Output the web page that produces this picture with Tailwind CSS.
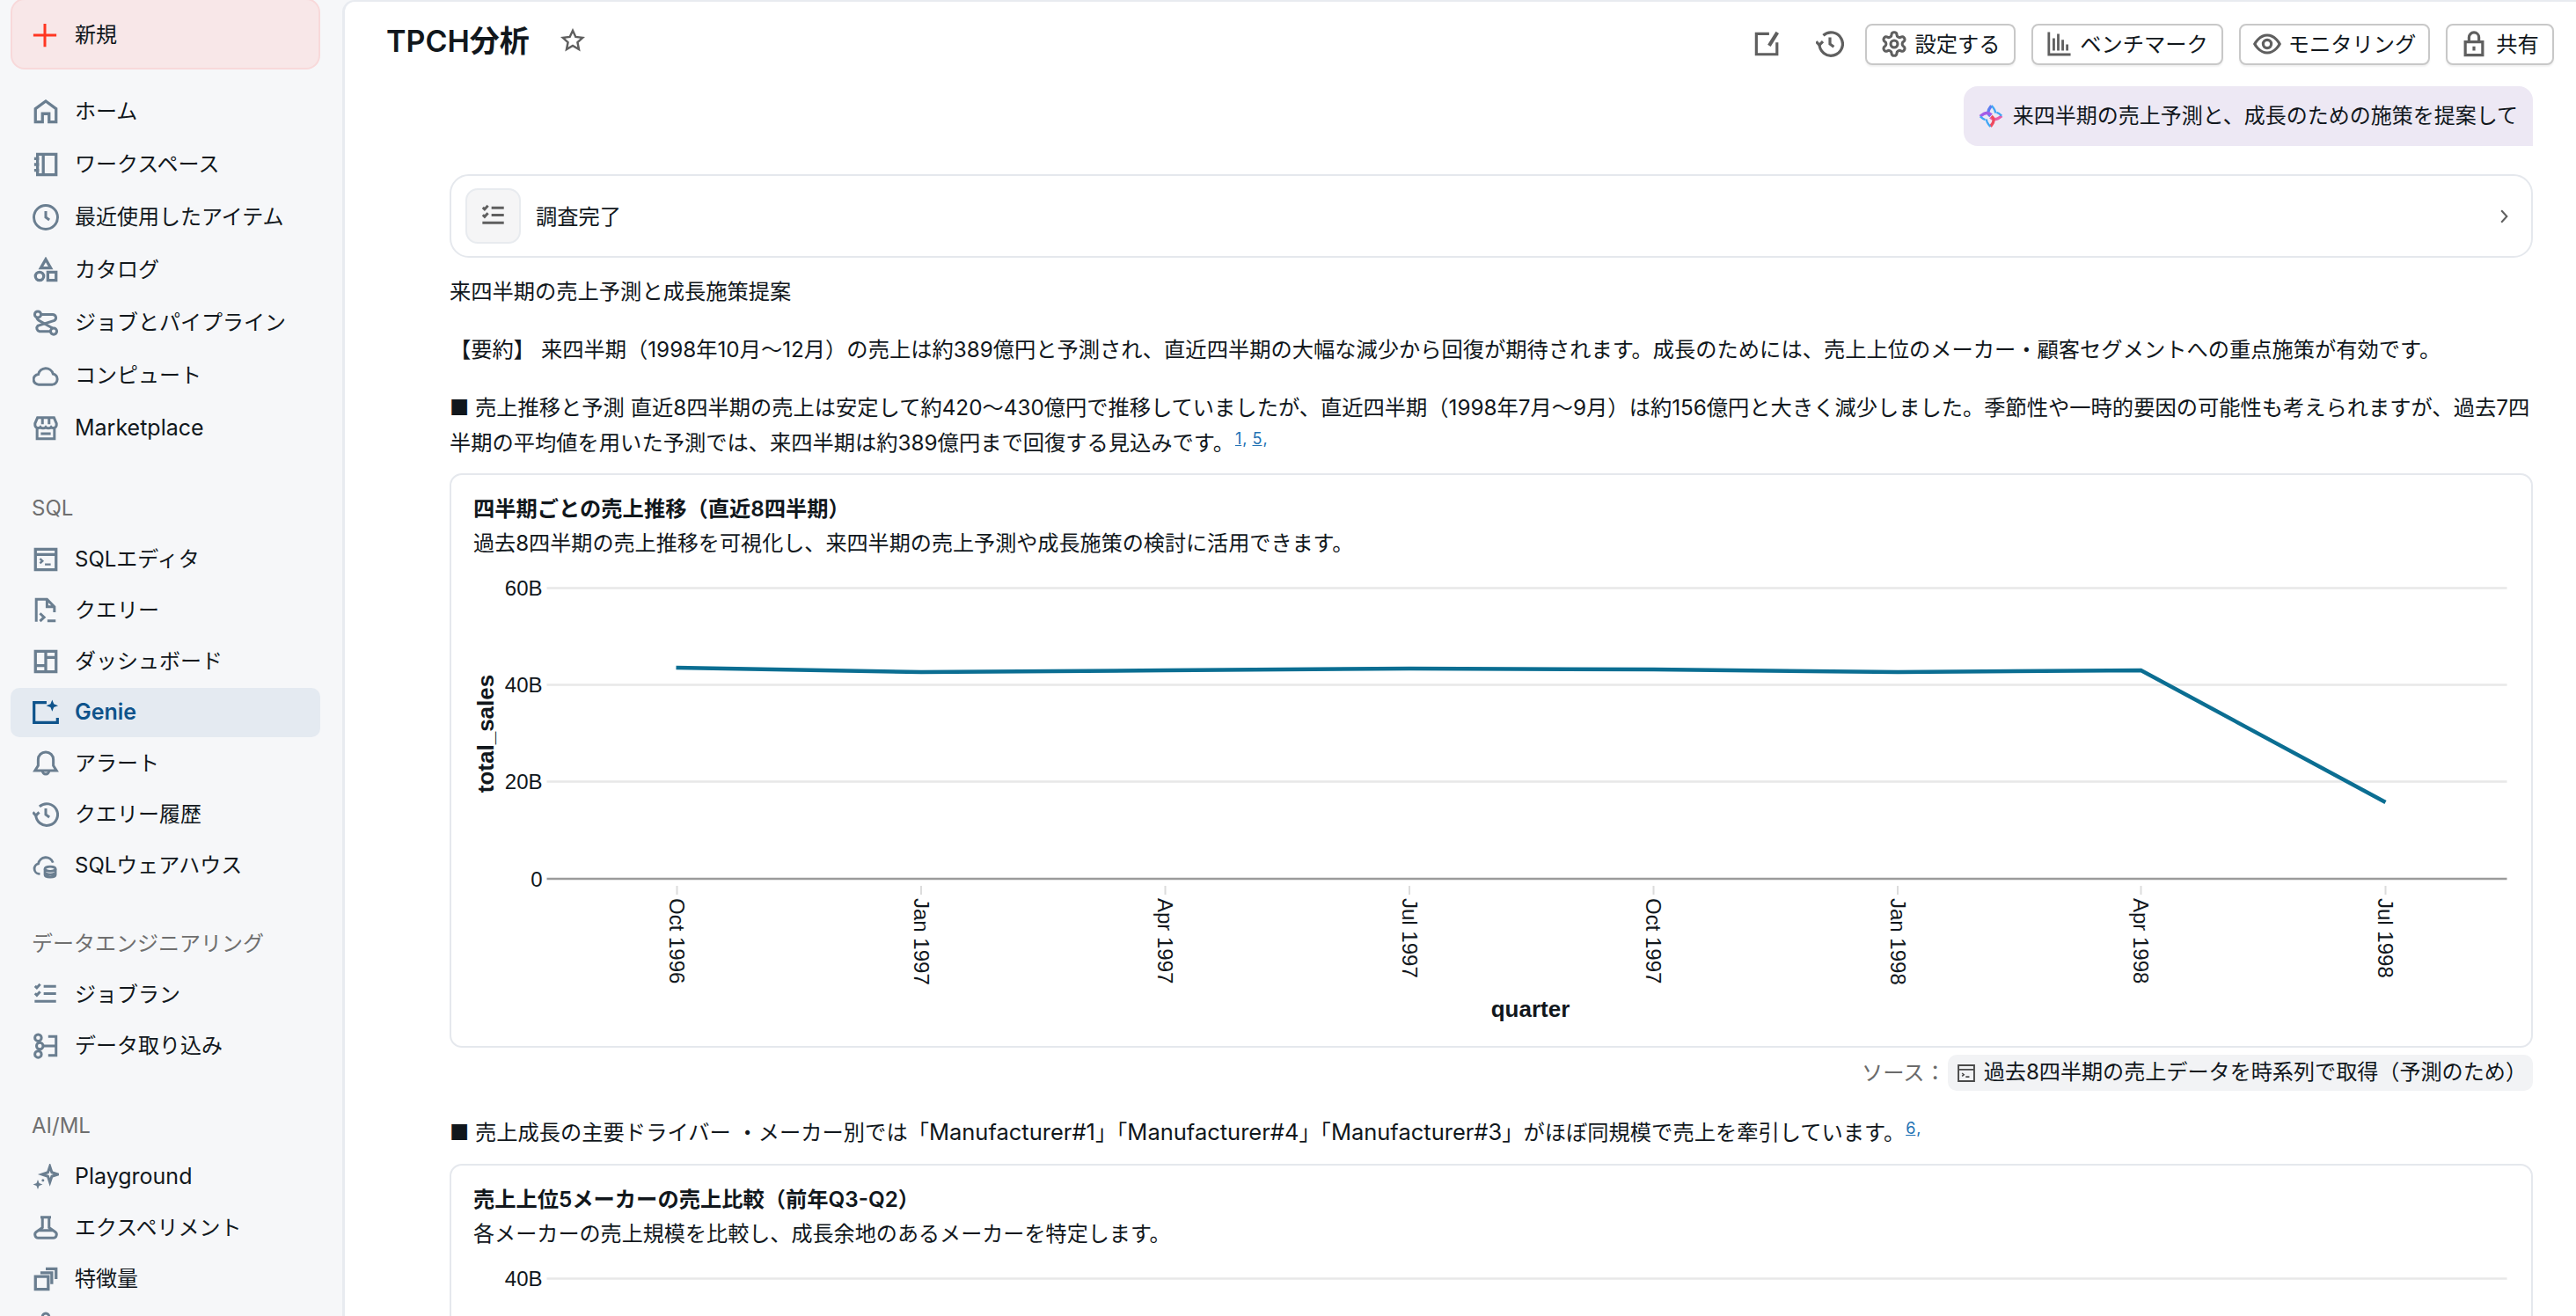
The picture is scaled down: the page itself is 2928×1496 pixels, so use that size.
<!DOCTYPE html>
<html lang="ja">
<head>
<meta charset="utf-8">
<title>TPCH分析</title>
<script src="https://cdn.jsdelivr.net/npm/@tailwindcss/browser@4"></script>
</head>
<body class="w-[2928px] h-[1496px] overflow-hidden bg-[#f6f7f9] text-[#11171c] font-['Inter','Noto_Sans_CJK_JP',sans-serif] text-[24.27px]">
<div class="flex w-full h-full">
  <!-- Sidebar -->
  <aside class="w-[389px] shrink-0 h-full overflow-hidden text-[24px]">
    <button class="ml-3 -mt-[2px] flex items-center gap-[19px] w-[352px] h-[81px] pl-[22px] pt-[2px] rounded-[16px] border-2 border-[#f8d9da] bg-[#f8e7e8]">
      <svg class="w-[30px] h-[30px] text-[#ff3621]" viewBox="0 0 16 16" fill="none" stroke="currentColor" stroke-width="1.6"><path d="M8 1v14M1 8h14"/></svg>
      <span>新規</span>
    </button>
    <nav class="mt-[18px]">
      <a class="flex items-center gap-[18px] h-[60px] pl-[37px]"><svg class="w-[30px] h-[30px] text-[#6a7e90]" viewBox="0 0 16 16" fill="none" stroke="currentColor" stroke-width="1.75"><path d="M1.75 14.25V6.200L8 1.600l6.250 4.600v8.050H10V9.200H6v5.050Z"/></svg><span>ホーム</span></a>
      <a class="flex items-center gap-[18px] h-[60px] pl-[37px]"><svg class="w-[30px] h-[30px] text-[#6a7e90]" viewBox="0 0 16 16" fill="none" stroke="currentColor" stroke-width="1.75"><path d="M3 1.750h11.250v12.500H3ZM6.500 1.750v12.500M1 4.500h3M1 8h3M1 11.500h3"/></svg><span>ワークスペース</span></a>
      <a class="flex items-center gap-[18px] h-[60px] pl-[37px]"><svg class="w-[30px] h-[30px] text-[#6a7e90]" viewBox="0 0 16 16" fill="none" stroke="currentColor" stroke-width="1.6"><circle cx="8" cy="8" r="7.200"/><path d="M8 4.250V8l2.200 1.600"/></svg><span>最近使用したアイテム</span></a>
      <a class="flex items-center gap-[18px] h-[60px] pl-[37px]"><svg class="w-[30px] h-[30px] text-[#6a7e90]" viewBox="0 0 16 16" fill="none" stroke="currentColor" stroke-width="1.75"><path d="M8 1.500 11 6.750H5Z"/><circle cx="4.250" cy="11.750" r="2.500"/><path d="M9.250 9.250h5v5h-5Z"/></svg><span>カタログ</span></a>
      <a class="flex items-center gap-[18px] h-[60px] pl-[37px]"><svg class="w-[30px] h-[30px] text-[#6a7e90]" viewBox="0 0 16 16" fill="none" stroke="currentColor" stroke-width="1.6"><circle cx="3.200" cy="2.900" r="1.900"/><circle cx="12.800" cy="13.100" r="1.900"/><path d="M5.200 2.900H12a2 2 0 0 1 1.200 3.700L3.200 9.800a2 2 0 0 0 1 3.400h6.600"/><path d="M2.600 4.900c.2 1.100 1 1.600 2 2.100l6 3.400c.5.3 1 .5 1.400.8"/></svg><span>ジョブとパイプライン</span></a>
      <a class="flex items-center gap-[18px] h-[60px] pl-[37px]"><svg class="w-[30px] h-[30px] text-[#6a7e90]" viewBox="0 0 16 16" fill="none" stroke="currentColor" stroke-width="1.6"><path d="M3.900 13.400a3.100 3.100 0 0 1-.4-6.200 4.600 4.600 0 0 1 8.900-.3 3.300 3.300 0 0 1-.3 6.500Z"/></svg><span>コンピュート</span></a>
      <a class="flex items-center gap-[18px] h-[60px] pl-[37px]"><svg class="w-[30px] h-[30px] text-[#6a7e90]" viewBox="0 0 16 16" fill="none" stroke="currentColor" stroke-width="1.6"><path d="M3 1.500h10l1.500 3.500v1a1.900 1.900 0 0 1-3.250 1.200 2.200 2.200 0 0 1-3.250 0 2.200 2.200 0 0 1-3.250 0A1.900 1.900 0 0 1 1.500 6V5ZM6 1.500v4M10 1.500v4M2.750 8v6.250h10.500V8M5 11.250h6"/></svg><span class="text-[25px]">Marketplace</span></a>
    </nav>

    <div class="mt-[46px] mb-[14px] h-[30px] pl-[36px] flex items-center text-[#6f6f6f]">SQL</div>
    <nav>
      <a class="flex items-center gap-[18px] h-[58px] pl-[37px]"><svg class="w-[30px] h-[30px] text-[#6a7e90]" viewBox="0 0 16 16" fill="none" stroke="currentColor" stroke-width="1.75"><path d="M1.750 1.750h12.500v12.500H1.750ZM1.750 5h12.500"/><path d="M4.500 7.500 6 8.900 4.500 10.300M7.500 11h3.500" stroke-width="1.300"/></svg><span>SQLエディタ</span></a>
      <a class="flex items-center gap-[18px] h-[58px] pl-[37px]"><svg class="w-[30px] h-[30px] text-[#6a7e90]" viewBox="0 0 16 16" fill="none" stroke="currentColor" stroke-width="1.600"><path d="M2.250 14.750V1.250h6.500l4.500 4.500V9M8.750 1.250v4.500h4.500"/><path d="M4.500 9.750 7 12.100 4.500 14.500M9 14.250h5"/></svg><span>クエリー</span></a>
      <a class="flex items-center gap-[18px] h-[58px] pl-[37px]"><svg class="w-[30px] h-[30px] text-[#6a7e90]" viewBox="0 0 16 16" fill="none" stroke="currentColor" stroke-width="1.750"><path d="M1.750 1.750h12.500v12.500H1.750ZM8 1.750v12.500M1.750 10.500H8M8 5.500h6.250"/></svg><span>ダッシュボード</span></a>
      <a class="ml-3 my-px flex items-center gap-[18px] w-[352px] h-[56px] pl-[25px] rounded-[10px] bg-[#e4eaf1] text-[#0e538b] font-semibold"><svg class="w-[30px] h-[30px]" viewBox="0 0 16 16" fill="none" stroke="currentColor" stroke-width="1.700"><path d="M8.500 1.900H.9v12.200h14.200V11.200"/><path d="M11.900.3l1 2.500 2.600 1-2.600 1-1 2.500-1-2.500-2.600-1 2.600-1Z" fill="currentColor" stroke="none"/></svg><span class="text-[25px]">Genie</span></a>
      <a class="flex items-center gap-[18px] h-[58px] pl-[37px]"><svg class="w-[30px] h-[30px] text-[#6a7e90]" viewBox="0 0 16 16" fill="none" stroke="currentColor" stroke-width="1.600"><path d="M8 1a4.600 4.600 0 0 0-4.600 4.600v3.600L1.500 12.200h13l-1.900-3V5.600A4.600 4.600 0 0 0 8 1Z"/><path d="M6 12.400a2 2 0 0 0 4 0"/></svg><span>アラート</span></a>
      <a class="flex items-center gap-[18px] h-[58px] pl-[37px]"><svg class="w-[30px] h-[30px] text-[#6a7e90]" viewBox="0 0 16 16" fill="none" stroke="currentColor" stroke-width="1.600"><path d="M2 8a6.600 6.600 0 1 0 2.200-4.900"/><path d="M.2 6.600 2 8.600l2-2"/><path d="M8 4.250V8l2.200 1.600"/></svg><span>クエリー履歴</span></a>
      <a class="flex items-center gap-[18px] h-[58px] pl-[37px]"><svg class="w-[30px] h-[30px] text-[#6a7e90]" viewBox="0 0 16 16" fill="none" stroke="currentColor" stroke-width="1.500"><path d="M4.500 13H3.900A3.100 3.100 0 0 1 3.500 6.900 4.600 4.600 0 0 1 12.400 6.200"/><ellipse cx="10.700" cy="10" rx="3.200" ry="1.400"/><path d="M7.500 10v3.600c0 .8 1.400 1.400 3.200 1.400s3.200-.6 3.200-1.400V10M7.500 12c0 .8 1.400 1.400 3.200 1.400s3.200-.6 3.200-1.400"/></svg><span>SQLウェアハウス</span></a>
    </nav>

    <div class="mt-[45px] mb-[14px] h-[30px] pl-[36px] flex items-center text-[#6f6f6f]">データエンジニアリング</div>
    <nav>
      <a class="flex items-center gap-[18px] h-[58px] pl-[37px]"><svg class="w-[30px] h-[30px] text-[#6a7e90]" viewBox="0 0 16 16" fill="none" stroke="currentColor" stroke-width="1.600"><path d="M1.500 2.600l1.100 1.100 2-2.200M1.500 7.100l1.100 1.100 2-2.200M6.750 2.750h7.500M6.750 7.250h7.500M1.250 11.900h13"/></svg><span>ジョブラン</span></a>
      <a class="flex items-center gap-[18px] h-[58px] pl-[37px]"><svg class="w-[30px] h-[30px] text-[#6a7e90]" viewBox="0 0 16 16" fill="none" stroke="currentColor" stroke-width="1.600"><circle cx="3.400" cy="3" r="2"/><circle cx="4.400" cy="8" r="2"/><circle cx="3.400" cy="13" r="2"/><path d="M9.500 2.250h4.750v11.500H9.500M6.500 8h7.750"/></svg><span>データ取り込み</span></a>
    </nav>

    <div class="mt-[47px] mb-[14px] h-[30px] pl-[36px] flex items-center text-[#6f6f6f]">AI/ML</div>
    <nav>
      <a class="flex items-center gap-[18px] h-[58px] pl-[37px]"><svg class="w-[30px] h-[30px] text-[#6a7e90]" viewBox="0 0 16 16" fill="none" stroke="currentColor" stroke-width="1.600"><path d="M10.500 1.600l1.200 3.600 3.600 1.200-3.600 1.200-1.200 3.600-1.200-3.600-3.600-1.200 3.600-1.200Z"/><path d="M3.200 9.600l.8 2.100 2.100.8-2.100.8-.8 2.100-.8-2.100-2.100-.8 2.100-.8Z" fill="currentColor" stroke="none"/><circle cx="6.300" cy="10" r=".8" fill="currentColor" stroke="none"/></svg><span class="text-[25px]">Playground</span></a>
      <a class="flex items-center gap-[18px] h-[58px] pl-[37px]"><svg class="w-[30px] h-[30px] text-[#6a7e90]" viewBox="0 0 16 16" fill="none" stroke="currentColor" stroke-width="1.600"><path d="M4.800 1.500h6.400M6 1.500v6.200L2.200 10.400c-1.400 1-.7 3.600 1.200 3.600h9.200c1.900 0 2.600-2.600 1.200-3.600L10 7.700V1.500M3.800 9.400h8.400"/></svg><span>エクスペリメント</span></a>
      <a class="flex items-center gap-[18px] h-[58px] pl-[37px]"><svg class="w-[30px] h-[30px] text-[#6a7e90]" viewBox="0 0 16 16" fill="none" stroke="currentColor" stroke-width="1.750"><path d="M1.750 6.500h7.750v7.750H1.750ZM8 1.750h6.250V8M4.750 4.200h6.900V11"/></svg><span>特徴量</span></a>
      <div class="pl-[37px] pt-[8px]"><svg class="w-[30px] h-[30px] text-[#6a7e90]" viewBox="0 0 16 16" fill="none" stroke="currentColor" stroke-width="1.600"><circle cx="8" cy="3" r="2"/><path d="M3 14l5-9 5 9Z"/></svg></div>
    </nav>
  </aside>

  <!-- Main -->
  <main class="flex-1 min-w-0 h-full overflow-hidden bg-white border-t-2 border-l-[3px] border-[#e8ebf0] rounded-tl-[14px]">
    <header class="flex items-center h-[96px] pl-[47px] pr-[25px]">
      <h1 class="mb-[6px] text-[34px] font-semibold leading-none">TPCH分析</h1>
      <svg class="ml-[35px] mb-[8px] w-[28px] h-[28px] text-[#5f5f5f]" viewBox="0 0 16 16" fill="none" stroke="currentColor" stroke-width="1.400"><path d="M8 1.600l1.900 4.100 4.500.5-3.300 3 .9 4.500-4-2.300-4 2.300.9-4.500-3.300-3 4.500-.5Z"/></svg>
      <div class="ml-auto flex items-center gap-[18px]">
        <svg class="mr-[22px] w-[30px] h-[30px] text-[#5f5f5f]" viewBox="0 0 16 16" fill="none" stroke="currentColor" stroke-width="1.700"><path d="M9 1.750H1.250v12.500h12.500V7"/><path d="M14 1 9 9" stroke-width="2.200"/></svg>
        <svg class="mr-[6px] w-[32px] h-[32px] text-[#5f5f5f]" viewBox="0 0 16 16" fill="none" stroke="currentColor" stroke-width="1.600"><path d="M2 8a6.600 6.600 0 1 0 2.200-4.900"/><path d="M.2 6.600 2 8.600l2-2"/><path d="M8 4.250V8l2.200 1.600"/></svg>
        <button class="flex items-center gap-[7px] h-[47px] w-[171px] justify-center rounded-[8px] border-2 border-[#c8c8c8] bg-white shadow-[0_2px_2px_rgba(0,0,0,0.06)]">
          <svg class="w-[32px] h-[32px] text-[#5f5f5f]" viewBox="0 0 24 24" fill="none" stroke="currentColor" stroke-width="2.300"><path d="M12.220 2h-.44a2 2 0 0 0-2 2v.18a2 2 0 0 1-1 1.730l-.43.25a2 2 0 0 1-2 0l-.15-.08a2 2 0 0 0-2.730.73l-.22.38a2 2 0 0 0 .73 2.730l.15.1a2 2 0 0 1 1 1.720v.51a2 2 0 0 1-1 1.740l-.15.09a2 2 0 0 0-.73 2.730l.22.38a2 2 0 0 0 2.730.73l.15-.08a2 2 0 0 1 2 0l.43.25a2 2 0 0 1 1 1.730V20a2 2 0 0 0 2 2h.44a2 2 0 0 0 2-2v-.18a2 2 0 0 1 1-1.730l.43-.25a2 2 0 0 1 2 0l.15.08a2 2 0 0 0 2.730-.73l.22-.39a2 2 0 0 0-.73-2.730l-.15-.08a2 2 0 0 1-1-1.740v-.5a2 2 0 0 1 1-1.740l.15-.09a2 2 0 0 0 .73-2.730l-.22-.38a2 2 0 0 0-2.730-.73l-.15.08a2 2 0 0 1-2 0l-.43-.25a2 2 0 0 1-1-1.730V4a2 2 0 0 0-2-2z"/><circle cx="12" cy="12" r="3"/></svg>
          <span>設定する</span>
        </button>
        <button class="flex items-center gap-[8px] h-[47px] w-[218px] justify-center rounded-[8px] border-2 border-[#c8c8c8] bg-white shadow-[0_2px_2px_rgba(0,0,0,0.06)]">
          <svg class="w-[30px] h-[30px] text-[#5f5f5f]" viewBox="0 0 16 16" fill="none" stroke="currentColor" stroke-width="1.500"><path d="M1.500 .8v13.600h13.200"/><path d="M4.500 4.500v7.500M7.200 1.800v10.200M9.900 5.500v6.500M12.600 8.200v3.800"/></svg>
          <span>ベンチマーク</span>
        </button>
        <button class="flex items-center gap-[8px] h-[47px] w-[217px] justify-center rounded-[8px] border-2 border-[#c8c8c8] bg-white shadow-[0_2px_2px_rgba(0,0,0,0.06)]">
          <svg class="w-[32px] h-[32px] text-[#5f5f5f]" viewBox="0 0 16 16" fill="none" stroke="currentColor" stroke-width="1.600"><path d="M.9 8S3.400 3 8 3s7.100 5 7.100 5-2.500 5-7.100 5-7.100-5-7.100-5Z"/><circle cx="8" cy="8" r="2.300"/></svg>
          <span>モニタリング</span>
        </button>
        <button class="flex items-center gap-[10px] h-[47px] w-[123px] justify-center rounded-[8px] border-2 border-[#c8c8c8] bg-white shadow-[0_2px_2px_rgba(0,0,0,0.06)]">
          <svg class="w-[30px] h-[30px] text-[#5f5f5f]" viewBox="0 0 16 16" fill="none" stroke="currentColor" stroke-width="1.700"><path d="M2.750 6.750h10.500v8H2.750ZM5 6.750V4a3 3 0 0 1 6 0v2.750M8 9.500v2.500"/></svg>
          <span>共有</span>
        </button>
      </div>
    </header>

    <div class="pl-[119px] pr-[49px]">
      <div class="flex justify-end">
        <div class="flex items-center gap-[11px] h-[68px] pl-[17px] pr-[17px] rounded-t-[16px] rounded-bl-[16px] bg-[#ede8f4] text-[24px]">
          <svg class="w-[28px] h-[28px]" viewBox="0 0 16 16" fill="none" stroke-width="1.900"><path d="M8.400 1.200c-1 1.400-2.200 2.400-2.200 4.200 0 1 .6 2 1.400 2.600" stroke="#5d7cf0"/><path d="M1 8.200c1.400-1.200 2.600-2.200 4.400-2.200 1.200 0 2.200.4 3 1.200" stroke="#a25ce8"/><path d="M15 7.800c-1.400 1.200-2.600 2.200-4.400 2.200-1.200 0-2.200-.4-3-1.200" stroke="#e85ca8"/><path d="M7.600 14.800c1-1.400 2.200-2.400 2.200-4.200 0-1-.6-2-1.400-2.600" stroke="#ef4a5f"/><path d="M8.400 1.200c.8.900 1.500 1.700 2 2.800.4 1 .5 1.500.6 2M7.600 14.800c-.8-.9-1.500-1.700-2-2.800-.4-1-.5-1.500-.6-2M1 8.200c1 .9 2 1.800 3.300 2.100M15 7.800c-1-.9-2-1.800-3.300-2.100" stroke="#3fa6f5" stroke-width="1.300"/></svg>
          <span>来四半期の売上予測と、成長のための施策を提案して</span>
        </div>
      </div>

      <div class="mt-[32px] h-[95px] flex items-center pl-[16px] pr-[22px] rounded-[22px] border-2 border-[#e5e8ed]">
        <div class="w-[63px] h-[63px] flex items-center justify-center rounded-[14px] border-2 border-[#e8ebef] bg-[#f5f5f6]">
          <svg class="w-[30px] h-[30px] text-[#5f5f5f]" viewBox="0 0 16 16" fill="none" stroke="currentColor" stroke-width="1.600"><path d="M1.500 2.600l1.100 1.100 2-2.200M1.500 7.100l1.100 1.100 2-2.200M6.750 2.750h7.500M6.750 7.250h7.500M1.250 11.900h13"/></svg>
        </div>
        <span class="ml-[17px] pt-[2px]">調査完了</span>
        <svg class="ml-auto w-[18px] h-[18px] text-[#5f5f5f]" viewBox="0 0 16 16" fill="none" stroke="currentColor" stroke-width="1.800"><path d="M5.500 2 11 8l-5.500 6"/></svg>
      </div>

      <p class="mt-[18px] leading-[40px]">来四半期の売上予測と成長施策提案</p>
      <p class="mt-[26px] leading-[40px]">【要約】 来四半期（1998年10月〜12月）の売上は約389億円と予測され、直近四半期の大幅な減少から回復が期待されます。成長のためには、売上上位のメーカー・顧客セグメントへの重点施策が有効です。</p>
      <p class="mt-[26px] leading-[40px]">■ 売上推移と予測 直近8四半期の売上は安定して約420〜430億円で推移していましたが、直近四半期（1998年7月〜9月）は約156億円と大きく減少しました。季節性や一時的要因の可能性も考えられますが、過去7四半期の平均値を用いた予測では、来四半期は約389億円まで回復する見込みです。<span class="ml-[1px] text-[18px] leading-none align-[7px] text-[#2272b4]"><u class="mr-[1px]">1</u><span class="mr-[1px]">,</span> <u class="mr-[1px]">5</u><span>,</span></span></p>

      <section class="mt-[15px] h-[653px] rounded-[14px] border-2 border-[#e5e8ed]">
        <div class="pt-[18px] pl-[25px]">
          <h3 class="leading-[40px] font-semibold">四半期ごとの売上推移（直近8四半期）</h3>
          <p class="leading-[40px] text-[24.1px]">過去8四半期の売上推移を可視化し、来四半期の売上予測や成長施策の検討に活用できます。</p>
        </div>
        <svg class="block w-full h-[551px]" viewBox="514 638 2363 551" fill="none" font-family="Liberation Sans, Arial, sans-serif">
          <g stroke="#e8e8e8" stroke-width="2.500"><path d="M622 668.500H2850M622 778.500H2850M622 888.500H2850"/></g>
          <path d="M622 999H2850" stroke="#9b9b9b" stroke-width="2.500"/>
          <g stroke="#dcdcdc" stroke-width="2"><path d="M770 1007v10M1047.500 1007v10M1325 1007v10M1602.500 1007v10M1880 1007v10M2157.500 1007v10M2434 1007v10M2712 1007v10"/></g>
          <path d="M769 759 1047.500 764 1325 762 1602.500 760 1880 761 2157.500 764 2434 762 2712 912" stroke="#0b6e92" stroke-width="4.500"/>
          <g fill="#11171c" font-size="24" text-anchor="end" dominant-baseline="central"><text x="617" y="668.500">60B</text><text x="617" y="778.500">40B</text><text x="617" y="888.500">20B</text><text x="617" y="999">0</text></g>
          <g fill="#11171c" font-size="24" dominant-baseline="central">
            <text transform="translate(770 1021) rotate(90)">Oct 1996</text>
            <text transform="translate(1047.500 1021) rotate(90)">Jan 1997</text>
            <text transform="translate(1325 1021) rotate(90)">Apr 1997</text>
            <text transform="translate(1602.500 1021) rotate(90)">Jul 1997</text>
            <text transform="translate(1880 1021) rotate(90)">Oct 1997</text>
            <text transform="translate(2157.500 1021) rotate(90)">Jan 1998</text>
            <text transform="translate(2434 1021) rotate(90)">Apr 1998</text>
            <text transform="translate(2712 1021) rotate(90)">Jul 1998</text>
          </g>
          <text fill="#11171c" font-size="26" font-weight="700" text-anchor="middle" dominant-baseline="central" transform="translate(552 834) rotate(-90)">total_sales</text>
          <text fill="#11171c" font-size="26" font-weight="700" text-anchor="middle" dominant-baseline="central" x="1740" y="1147">quarter</text>
        </svg>
      </section>

      <div class="mt-[8px] flex justify-end items-center gap-[2px]">
        <span class="text-[#6b6b6b]">ソース：</span>
        <div class="flex items-center gap-[9px] h-[41px] pl-[10px] pr-[7px] rounded-[10px] bg-[#f2f3f5] text-[24.1px]">
          <svg class="w-[22px] h-[22px] text-[#4a4a4a]" viewBox="0 0 16 16" fill="none" stroke="currentColor" stroke-width="1.400"><path d="M1.500 1.500h13v13h-13ZM1.500 5h13"/><path d="M4.500 8 6 9.200 4.500 10.400M7.500 11h3" stroke-width="1.100"/></svg>
          <span>過去8四半期の売上データを時系列で取得（予測のため）</span>
        </div>
      </div>

      <p class="mt-[27px] leading-[40px]">■ 売上成長の主要ドライバー ・メーカー別では「<span class="text-[25.5px]">Manufacturer#1</span>」「<span class="text-[25.5px]">Manufacturer#4</span>」「<span class="text-[25.5px]">Manufacturer#3</span>」がほぼ同規模で売上を牽引しています。<span class="ml-[1px] text-[18px] leading-none align-[7px] text-[#2272b4]"><u class="mr-[1px]">6</u><span>,</span></span></p>

      <section class="mt-[16px] h-[400px] rounded-[14px] border-2 border-[#e5e8ed]">
        <div class="pt-[18px] pl-[25px]">
          <h3 class="leading-[40px] font-semibold">売上上位5メーカーの売上比較（前年Q3-Q2）</h3>
          <p class="leading-[40px] text-[24.1px]">各メーカーの売上規模を比較し、成長余地のあるメーカーを特定します。</p>
        </div>
        <svg class="block w-full h-[200px]" viewBox="514 1423 2363 200" fill="none" font-family="Liberation Sans, Arial, sans-serif">
          <path d="M622 1453.500H2850" stroke="#e8e8e8" stroke-width="2.500"/>
          <text x="617" y="1453.500" fill="#11171c" font-size="24" text-anchor="end" dominant-baseline="central">40B</text>
        </svg>
      </section>
    </div>
  </main>
</div>
</body>
</html>
